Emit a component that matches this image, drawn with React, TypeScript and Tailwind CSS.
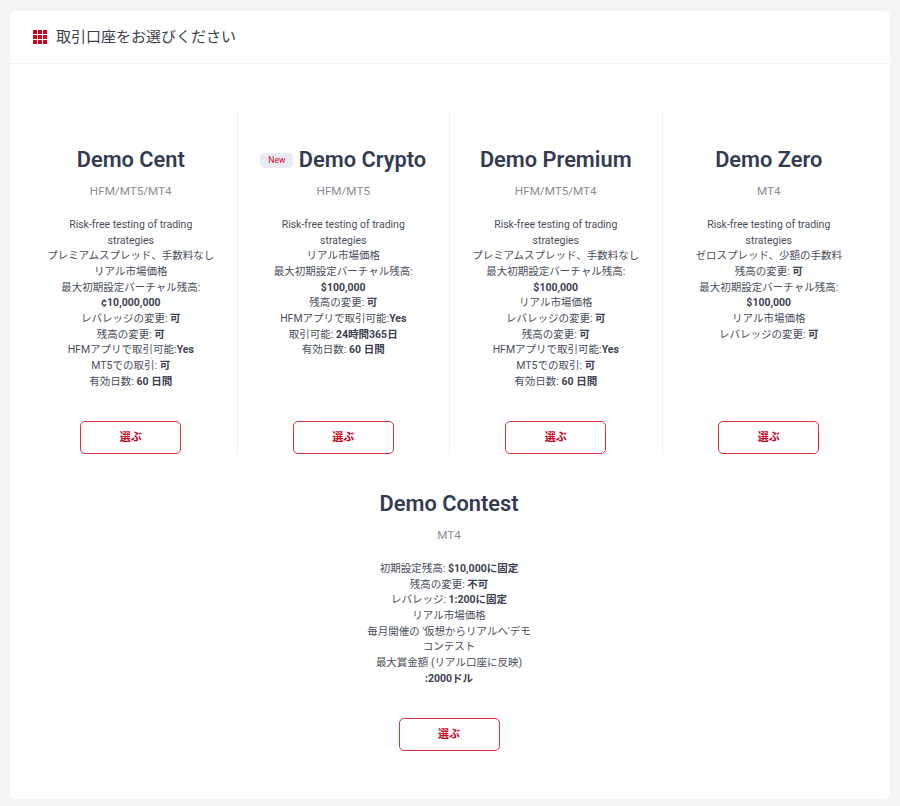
const accounts = [
  {
    name: "Demo Cent",
    platforms: "HFM/MT5/MT4",
    lines: [
      ["Risk-free testing of trading strategies"],
      ["プレミアムスプレッド、手数料なし"],
      ["リアル市場価格"],
      ["最大初期設定バーチャル残高: ", "¢10,000,000"],
      ["レバレッジの変更: ", "可"],
      ["残高の変更: ", "可"],
      ["HFMアプリで取引可能:", "Yes"],
      ["MT5での取引: ", "可"],
      ["有効日数: ", "60 日間"],
    ],
  },
  {
    name: "Demo Crypto",
    isNew: true,
    platforms: "HFM/MT5",
    lines: [
      ["Risk-free testing of trading strategies"],
      ["リアル市場価格"],
      ["最大初期設定バーチャル残高: ", "$100,000"],
      ["残高の変更: ", "可"],
      ["HFMアプリで取引可能:", "Yes"],
      ["取引可能: ", "24時間365日"],
      ["有効日数: ", "60 日間"],
    ],
  },
  {
    name: "Demo Premium",
    platforms: "HFM/MT5/MT4",
    lines: [
      ["Risk-free testing of trading strategies"],
      ["プレミアムスプレッド、手数料なし"],
      ["最大初期設定バーチャル残高: ", "$100,000"],
      ["リアル市場価格"],
      ["レバレッジの変更: ", "可"],
      ["残高の変更: ", "可"],
      ["HFMアプリで取引可能:", "Yes"],
      ["MT5での取引: ", "可"],
      ["有効日数: ", "60 日間"],
    ],
  },
  {
    name: "Demo Zero",
    platforms: "MT4",
    lines: [
      ["Risk-free testing of trading strategies"],
      ["ゼロスプレッド、少額の手数料"],
      ["残高の変更: ", "可"],
      ["最大初期設定バーチャル残高: ", "$100,000"],
      ["リアル市場価格"],
      ["レバレッジの変更: ", "可"],
    ],
  },
];

const contest = {
  name: "Demo Contest",
  platforms: "MT4",
  lines: [
    ["初期設定残高: ", "$10,000に固定"],
    ["残高の変更: ", "不可"],
    ["レバレッジ: ", "1:200に固定"],
    ["リアル市場価格"],
    ["毎月開催の '仮想からリアルへ'デモコンテスト"],
    ["最大賞金額 (リアル口座に反映) ", ":2000ドル"],
  ],
};

function Account({ item, divider }: { item: any; divider?: boolean }) {
  return (
    <div className={`w-[212.5px] px-[21px] pt-[35px] pb-px flex flex-col items-center text-center ${divider ? "border-r border-[#f1f1f3]" : ""}`}>
      <div className="flex items-center justify-center h-[26px] whitespace-nowrap">
        {item.isNew && (
          <span className="mr-[5.5px] w-[33px] h-[15px] rounded-[5px] bg-[#e9ebf3] text-[#d0021b] text-[8.5px] leading-[15px]">New</span>
        )}
        <h2 className="text-[21.8px] leading-[26px] font-semibold text-[#343b52]">{item.name}</h2>
      </div>
      <p className="mt-[9px] text-[11.7px] leading-[18px] text-[#8a8d96]">{item.platforms}</p>
      <div className="mt-[17px] text-[10.5px] leading-[15.65px] text-[#4a4e5c]">
        {item.lines.map((line: string[], i: number) => (
          <p key={i}>
            {line[0]}
            {line[1] && <b className="font-bold text-[#3c4152]">{line[1]}</b>}
          </p>
        ))}
      </div>
      <button className="mt-auto w-[101px] h-[33px] shrink-0 pt-px rounded-[5px] border border-[#d8303f] bg-white text-[11px] font-bold text-[#c8001a]">
        選ぶ
      </button>
    </div>
  );
}

export default function App() {
  return (
    <div className="min-h-[806px] bg-[#f5f5f5] px-[10px] pt-[11px] pb-[7px] font-['Roboto','Noto_Sans_CJK_JP',sans-serif]">
      <div className="h-[788px] rounded-[6px] bg-white">
        <div className="h-[53px] flex items-center gap-[9px] pl-[23px] border-b border-[#f1f1f3]">
          <svg width="14" height="14" viewBox="0 0 14 14" fill="#c8001a">
            <rect x="0" y="0" width="4" height="4" rx="0.5" />
            <rect x="5" y="0" width="4" height="4" rx="0.5" />
            <rect x="10" y="0" width="4" height="4" rx="0.5" />
            <rect x="0" y="5" width="4" height="4" rx="0.5" />
            <rect x="5" y="5" width="4" height="4" rx="0.5" />
            <rect x="10" y="5" width="4" height="4" rx="0.5" />
            <rect x="0" y="10" width="4" height="4" rx="0.5" />
            <rect x="5" y="10" width="4" height="4" rx="0.5" />
            <rect x="10" y="10" width="4" height="4" rx="0.5" />
          </svg>
          <h1 className="text-[15px] text-[#3a3f4e]">取引口座をお選びください</h1>
        </div>
        <div className="px-[15px] pt-[48px]">
          <div className="flex h-[343px]">
            {accounts.map((a, i) => (
              <Account key={a.name} item={a} divider={i < 3} />
            ))}
          </div>
          <div className="flex justify-center h-[297px] pt-px pr-[2px]">
            <Account item={contest} />
          </div>
        </div>
      </div>
    </div>
  );
}
